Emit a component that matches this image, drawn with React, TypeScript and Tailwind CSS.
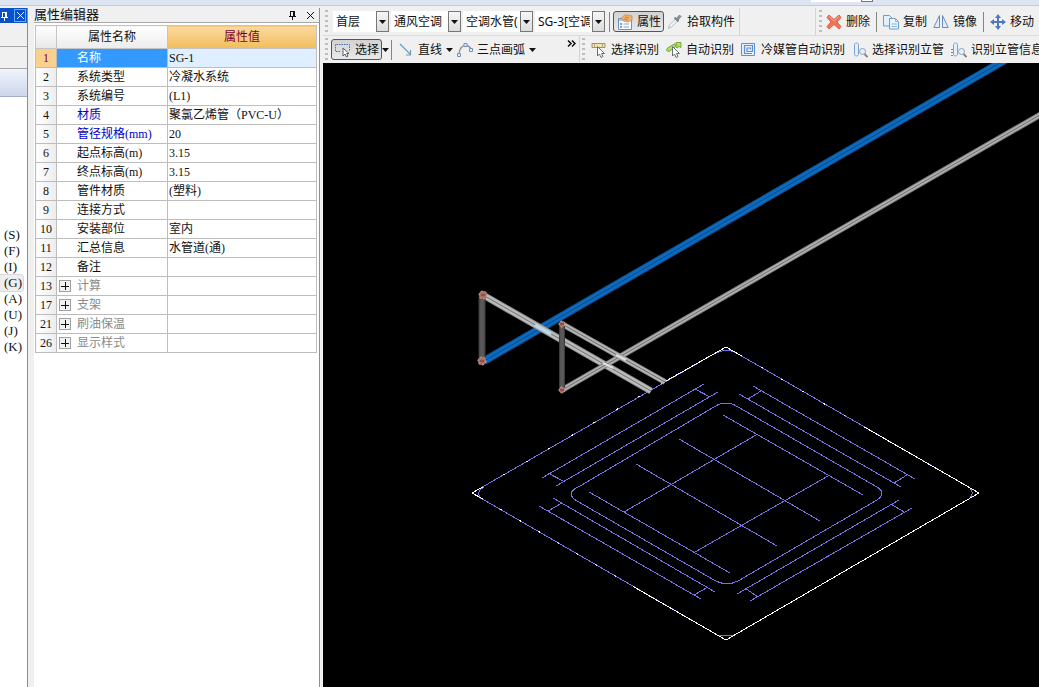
import type { ReactNode } from "react";

interface PropertyRow {
  no: number;
  name: string;
  value?: string;
  tone?: "link" | "group";
}

const rows: PropertyRow[] = [
  { no: 1, name: "名称", value: "SG-1" },
  { no: 2, name: "系统类型", value: "冷凝水系统" },
  { no: 3, name: "系统编号", value: "(L1)" },
  { no: 4, name: "材质", value: "聚氯乙烯管（PVC-U）", tone: "link" },
  { no: 5, name: "管径规格(mm)", value: "20", tone: "link" },
  { no: 6, name: "起点标高(m)", value: "3.15" },
  { no: 7, name: "终点标高(m)", value: "3.15" },
  { no: 8, name: "管件材质", value: "(塑料)" },
  { no: 9, name: "连接方式" },
  { no: 10, name: "安装部位", value: "室内" },
  { no: 11, name: "汇总信息", value: "水管道(通)" },
  { no: 12, name: "备注" },
  { no: 13, name: "计算", tone: "group" },
  { no: 17, name: "支架", tone: "group" },
  { no: 21, name: "刷油保温", tone: "group" },
  { no: 26, name: "显示样式", tone: "group" },
];

const shortcuts = ["(S)", "(F)", "(I)", "(G)", "(A)", "(U)", "(J)", "(K)"];

const Icon = ({ children }: { children: ReactNode }) => (
  <svg width="16" height="16" viewBox="0 0 16 16" fill="none" className="shrink-0" aria-hidden="true">
    {children}
  </svg>
);

const PinIcon = () => (
  <svg width="9" height="10" viewBox="0 0 9 10" fill="none" stroke="currentColor" shapeRendering="crispEdges" aria-hidden="true">
    <path d="M2.5 1v5M2 1.5h4M6 1v5M5.5 1v5M1 6.5h7M4.5 6v4" />
  </svg>
);

const CloseIcon = () => (
  <svg width="9" height="9" viewBox="0 0 9 9" fill="none" stroke="currentColor" aria-hidden="true">
    <path d="M1 1l7 7M8 1L1 8" />
  </svg>
);

const Triangle = () => (
  <svg width="7" height="4" viewBox="0 0 7 4" className="shrink-0" aria-hidden="true">
    <path d="M0 0h7L3.5 4z" fill="#111" />
  </svg>
);

const SelectIcon = () => (
  <Icon>
    <path d="M.5 9V2.500h14V9M1 9.500h5" stroke="#3b6fb6" strokeDasharray="1.500 1" />
    <path d="M8 6v8l2-2 1.500 3 1.500-1-1.300-2.500H14z" fill="#fff" stroke="#55616f" />
  </Icon>
);

const LineIcon = () => (
  <Icon>
    <path d="M2 2l10 10M12.500 8v5H8" stroke="#6f9bb8" strokeWidth="1.200" />
  </Icon>
);

const ArcIcon = () => (
  <Icon>
    <path d="M2 12C2.500 6 5 4 8 3.500M9 3.500c3 .5 4.500 2 5 4" stroke="#8796ab" strokeWidth="1.300" />
    <path d="M.5 11.500h3v3h-3zM7 1.500h3v3H7zM12.500 6.500h3v3h-3z" fill="#e6edf7" stroke="#7890b2" />
  </Icon>
);

const PropertyIcon = () => (
  <Icon>
    <path d="M1.500 4.500h13v11h-13z" fill="#f8fbff" stroke="#6f8fb3" />
    <path d="M2 5h12v2H2z" fill="#a9c5e6" />
    <path d="M3 9h2v2H3zM3 12h2v2H3z" fill="#7d9fc8" />
    <path d="M6.500 10H12M6.500 13H12" stroke="#8ba5c3" />
    <path d="M4.500 4l3-3h4l3.500 1v4l-4 2-4.500-1z" fill="#eeb16e" stroke="#cf8b48" strokeWidth=".8" />
    <path d="M8 3l4 1M7 5l4 1" stroke="#b86b2c" strokeWidth=".7" />
  </Icon>
);

const PickIcon = () => (
  <Icon>
    <path d="M1.500 14.500l1-3.500 6-6 2 2-6 6z" fill="#f4f6f8" stroke="#b4bac2" />
    <path d="M7.500 3.500l4 4" stroke="#7b858f" strokeWidth="2" />
    <path d="M9.500 4.500l3-3.500 1.500 1.500-3 3.500z" fill="#8b949c" stroke="#7b858f" />
  </Icon>
);

const PipeSelectIcon = () => (
  <Icon>
    <path d="M1 1.500h13v4H1z" fill="#f3e3b0" stroke="#a0926a" />
    <path d="M3.500 2v3.500M11.500 2v3.500" stroke="#b8a878" />
    <path d="M6.500 4.500v9.500l2-2 1.500 3.500 2-1-1.500-3h3z" fill="#fff" stroke="#6b6f76" />
  </Icon>
);

const PipeAutoIcon = () => (
  <Icon>
    <path d="M.5 8.500l1-2.500L9 1.500l2 2-8 6zM10 .5h5v5l-2-1-2 1.500-2-2 1.500-1.500z" fill="#b5dc72" stroke="#7ba737" />
    <path d="M6.500 4.500v9.500l2-2 1.500 3.500 2-1-1.500-3h3z" fill="#fff" stroke="#68736c" />
  </Icon>
);

const CoolantIcon = () => (
  <Icon>
    <path d="M.5 1.500h13v12H.5z" fill="#e6effb" stroke="#5d91d4" />
    <path d="M11 11.500H3.500v-8h8v6H6v-3.500h3.500v1.500" stroke="#5d91d4" strokeWidth="1.200" />
  </Icon>
);

const RiserIcon = ({ lines = false }: { lines?: boolean }) => (
  <Icon>
    <path d="M2.500 2.500c0-2 4-2 4 0v10c0 2-4 2-4 0z" fill="#e3eefb" stroke="#7ea3cb" />
    {lines && <path d="M0 7.500h2M0 10.500h2M0 13.500h2" stroke="#77889a" />}
    <circle cx="10.500" cy="9.500" r="3" fill="#e3effb" stroke="#91a3b6" />
    <path d="M12.500 12l3 3" stroke="#8b7f85" strokeWidth="1.800" />
  </Icon>
);

const DeleteIcon = () => (
  <Icon>
    <path d="M3 1l5 4.500L13 1l2 2.500L11 8l4 4.500L13 15l-5-4.500L3 15 1 12.500 5 8 1 3.500z" fill="#ee7359" stroke="#e2604c" />
    <path d="M3 2.500l5 4.500 5-4.500" stroke="#f6a792" />
  </Icon>
);

const CopyIcon = () => (
  <Icon>
    <path d="M.5 1.500h6l2.500 2.500v8H.5z" fill="#e1f0fb" stroke="#6d9fc4" />
    <path d="M6.500 4.500h6l3 3v7.500h-9z" fill="#e9f5fd" stroke="#6d9fc4" />
    <path d="M12.500 4.500v3h3M8.500 10H14M8.500 12.500H14" stroke="#8db6d6" />
  </Icon>
);

const MirrorIcon = () => (
  <Icon>
    <path d="M6.500 1.500v12H.8zM9.500 1.500v12h5.700z" fill="#e4edfa" stroke="#6b8bc0" />
  </Icon>
);

const MoveIcon = () => (
  <Icon>
    <path d="M8 2v12M2 8h12" stroke="#4d7ab9" strokeWidth="2" />
    <path d="M8 0l3 4H5zM8 16l-3-4h6zM0 8l4-3v6zM16 8l-4 3V5z" fill="#4d7ab9" />
  </Icon>
);

const Handle = () => (
  <span className="w-[3px] h-6 shrink-0 bg-[repeating-linear-gradient(#bdbdbd_0_2px,transparent_2px_5px)]" />
);

const Divider = () => <span className="w-px h-5 shrink-0 bg-[#858585]" />;

const ToolButton = ({ icon, label, active = false }: { icon: ReactNode; label: string; active?: boolean }) => (
  <button
    className={`flex items-center shrink-0 h-[21px] gap-1 whitespace-nowrap ${
      active
        ? "w-[51px] pl-[3px] rounded-[3px] border border-[#555] bg-gradient-to-b from-[#d2d2d2] to-[#e9e9e9]"
        : ""
    }`}
  >
    {icon}
    <span>{label}</span>
  </button>
);

const MenuArrow = ({ label }: { label: string }) => (
  <button aria-label={label} className="flex items-center justify-center w-[7px] h-5 shrink-0">
    <Triangle />
  </button>
);

const ToolSelect = ({ label, value, wide = true }: { label: string; value: string; wide?: boolean }) => (
  <div className={`relative h-[21px] shrink-0 bg-white ${wide ? "w-[70px]" : "w-14"}`}>
    <select aria-label={label} className="appearance-none w-full h-full pl-[3px] pr-[15px] bg-white outline-none">
      <option>{value}</option>
    </select>
    <span className="absolute right-0 top-0 flex items-center justify-center w-[13px] h-full border border-[#777] bg-gradient-to-b from-[#f6f6f6] to-[#dcdcdc] pointer-events-none">
      <Triangle />
    </span>
  </div>
);

const LeftDock = () => (
  <aside className="flex flex-col w-7 shrink-0 border-r border-[#8e8e8e] bg-white">
    <div className="flex items-center justify-end h-[15px] pr-px gap-[5px] bg-[#0a50c8] text-white">
      <button aria-label="固定">
        <PinIcon />
      </button>
      <button aria-label="关闭" className="flex items-center justify-center w-4 h-[13px] border border-[#5fb0ff]">
        <CloseIcon />
      </button>
    </div>
    <div className="h-6 border-b border-[#a8a8a8] bg-[#f0f0f0]" />
    <div className="h-[22px] border-b border-[#a8a8a8] bg-[#f0f0f0]" />
    <div className="h-7 border-b border-[#a5b0c8] bg-gradient-to-b from-[#f0f4fb] to-[#cdd7ec]" />
    <ul className="mt-[130px] font-['Liberation_Serif',serif] text-[13px] leading-4">
      {shortcuts.map((key) => (
        <li
          key={key}
          className={`h-4 pl-1 mr-1 ${key === "(G)" ? "rounded-r-[2px] bg-[#eeeeee] outline outline-[#d9d9d9]" : ""}`}
        >
          {key}
        </li>
      ))}
    </ul>
  </aside>
);

const nameColor = (row: PropertyRow) => {
  if (row.no === 1) return "bg-[#3399ff] text-white";
  if (row.tone === "link") return "text-[#0000c8]";
  if (row.tone === "group") return "text-[#8a8a8a]";
  return "";
};

const PropertyEditor = () => (
  <section className="flex flex-col w-[286px] ml-[6px] shrink-0 border-r border-[#8e8e8e] bg-white font-['Liberation_Serif','Noto_Sans_CJK_SC',serif]">
    <div className="flex items-center h-[15px] pr-1 bg-[#f0f0f0] border-b border-[#a8a8a8]">
      <h2 className="text-[13px] leading-[14px]">属性编辑器</h2>
      <button aria-label="固定" className="ml-auto">
        <PinIcon />
      </button>
      <button aria-label="关闭" className="ml-[9px]">
        <CloseIcon />
      </button>
    </div>
    <table className="table-fixed w-[282px] mt-[2px] ml-px border-collapse leading-[18px]">
      <thead>
        <tr className="h-[23px]">
          <th className="w-[21px] p-0 border border-[#c4c4c4] bg-gradient-to-b from-white to-[#e8e8e8]" />
          <th className="w-[111px] p-0 border border-[#c4c4c4] bg-gradient-to-b from-white to-[#ececec] font-normal">属性名称</th>
          <th className="p-0 border border-[#c4c4c4] bg-gradient-to-b from-[#fad9a0] to-[#f2bd58] font-normal text-[#800030]">属性值</th>
        </tr>
      </thead>
      <tbody>
        {rows.map((row) => (
          <tr key={row.no} className="h-[19px]">
            <td
              className={`p-0 border border-[#bdbdbd] text-center ${
                row.no === 1 ? "bg-[#fad08e] text-[#800030]" : "bg-gradient-to-r from-white to-[#ececec]"
              }`}
            >
              {row.no}
            </td>
            <td className={`p-0 border border-[#bdbdbd] ${nameColor(row)}`}>
              <div className="flex items-center h-[18px] pl-[2px]">
                <span className="w-[18px] shrink-0 flex">
                  {row.tone === "group" && (
                    <button aria-label={`展开${row.name}`} className="w-3 h-3 border border-[#a0a0a0] bg-[#f2f2f2]">
                      <svg width="10" height="10" viewBox="0 0 10 10" stroke="#111" shapeRendering="crispEdges">
                        <path d="M1 5.500h8M5.500 1v8" />
                      </svg>
                    </button>
                  )}
                </span>
                {row.name}
              </div>
            </td>
            <td className={`p-0 border border-[#bdbdbd] ${row.no === 1 ? "bg-[#dfefff]" : ""}`}>
              <div className="h-[18px] pl-px">{row.value}</div>
            </td>
          </tr>
        ))}
      </tbody>
    </table>
  </section>
);

const Toolbars = () => (
  <div className="shrink-0 bg-[#f0f0f0] whitespace-nowrap">
    <div className="flex h-7 border-b border-[#dcdcdc]">
      <div className="flex items-center shrink-0 pl-[2px] pr-1 border-r border-[#d4d4d4]">
        <Handle />
        <div className="flex gap-[2px] ml-[5px]">
          <ToolSelect label="楼层" value="首层" wide={false} />
          <ToolSelect label="专业" value="通风空调" />
          <ToolSelect label="构件类型" value="空调水管(水)" />
          <ToolSelect label="构件" value="SG-3[空调水]" />
        </div>
        <div className="flex items-center gap-[3px] ml-[4px]">
          <Divider />
          <ToolButton icon={<PropertyIcon />} label="属性" active />
          <ToolButton icon={<PickIcon />} label="拾取构件" />
        </div>
      </div>
      <div className="flex items-center shrink-0 ml-[75px] pl-[3px] border-l border-[#d4d4d4]">
        <Handle />
        <div className="flex items-center gap-[6px] ml-1">
          <ToolButton icon={<DeleteIcon />} label="删除" />
          <Divider />
          <ToolButton icon={<CopyIcon />} label="复制" />
          <ToolButton icon={<MirrorIcon />} label="镜像" />
          <Divider />
          <ToolButton icon={<MoveIcon />} label="移动" />
        </div>
      </div>
    </div>
    <div className="flex h-[27px]">
      <div className="flex items-center w-[257px] shrink-0 pl-[2px] pr-[3px] border-r border-[#d4d4d4]">
        <Handle />
        <div className="flex items-center ml-[3px]">
          <ToolButton icon={<SelectIcon />} label="选择" active />
          <MenuArrow label="选择方式" />
        </div>
        <div className="flex items-center gap-[3px] ml-[2px]">
          <Divider />
          <div className="flex items-center gap-1 ml-[3px]">
            <ToolButton icon={<LineIcon />} label="直线" />
            <MenuArrow label="直线类型" />
            <ToolButton icon={<ArcIcon />} label="三点画弧" />
            <MenuArrow label="画弧类型" />
          </div>
        </div>
        <button aria-label="更多" className="ml-auto mb-3">
          <svg width="9" height="7" viewBox="0 0 9 7" fill="none" stroke="#111" strokeWidth="1.500">
            <path d="M1 .5l3 3-3 3M5 .5l3 3-3 3" />
          </svg>
        </button>
      </div>
      <div className="flex items-center shrink-0 pl-[2px]">
        <Handle />
        <div className="flex items-center gap-[7px] ml-[6px]">
          <ToolButton icon={<PipeSelectIcon />} label="选择识别" />
          <ToolButton icon={<PipeAutoIcon />} label="自动识别" />
          <ToolButton icon={<CoolantIcon />} label="冷媒管自动识别" />
          <ToolButton icon={<RiserIcon />} label="选择识别立管" />
          <ToolButton icon={<RiserIcon lines />} label="识别立管信息" />
        </div>
      </div>
    </div>
  </div>
);

interface PipeProps {
  d: string;
  width: number;
  edge: string;
  body: string;
  core: string;
}

const Pipe = ({ d, width, edge, body, core }: PipeProps) => (
  <g>
    <path d={d} stroke={edge} strokeWidth={width} />
    <path d={d} stroke={body} strokeWidth={width - 2} />
    <path d={d} stroke={core} strokeWidth="1" />
  </g>
);

const Viewport = () => (
  <div className="flex-1 min-h-0 bg-black overflow-hidden">
    <svg className="block w-full h-full" viewBox="323 63 716 624" preserveAspectRatio="xMinYMin slice" fill="none" role="img" aria-label="三维视图">
      {/* Fan coil unit outline */}
      <g stroke="#7474e6" shapeRendering="crispEdges">
        <path d="M472 493L726 347L979 493L726 640Z" />
        <path d="M484 487Q474 493 483 500M716 353Q726 348 737 353M969 487Q976 493 968 500M719 635H734" />
        <path d="M580 486L714 407Q726 399 738 407L877 487Q887 493 877 500L738 581Q726 587 714 580L577 501Q564 493 580 486" />
        <path d="M542 478L704 384M556 486L718 392M548 473L563 481M695 389L710 397" />
        <path d="M539 506L701 599M553 498L715 592M548 511L562 503M694 595L708 587" />
        <path d="M753 386L915 479M739 394L901 487M748 399L761 391M894 483L907 475" />
        <path d="M737 594L899 500M750 601L912 508M745 588L758 597M891 504L904 512" />
        <path d="M723 415L863 495M679 439L820 521M636 464L777 546M589 492L730 573" />
        <path d="M624 512L756 435M695 552L828 476" />
      </g>
      <g stroke="#fff" shapeRendering="crispEdges">
        <path d="M481 488L472 493L481 498M666 381L726 347L740 355M866 428L979 493L726 640L634 587" />
        <path d="M481 488L666 381" strokeDasharray="2 24" />
        <path d="M740 355L866 428" strokeDasharray="2 22" />
        <path d="M481 498L634 587" strokeDasharray="2 20" />
      </g>
      {/* Pipes */}
      <Pipe d="M484 361L1012 56" width={8} edge="#0b4f94" body="#0c6bbd" core="#084a8c" />
      <Pipe d="M483 295L651 391" width={7} edge="#8f8f8f" body="#bcbcbc" core="#707070" />
      <path d="M535 325L551 334" stroke="#b9dcec" strokeWidth="3" />
      <Pipe d="M562 390L1045 112" width={6} edge="#7c7c7c" body="#b2b2b2" core="#6c6c6c" />
      <Pipe d="M562 324L665 382" width={6} edge="#8f8f8f" body="#b8b8b8" core="#686868" />
      <path d="M616 355l10 5M603 363l10 5" stroke="#dedede" strokeWidth="2" />
      <Pipe d="M482 297V360" width={7} edge="#3c3c3c" body="#545454" core="#5e5e5e" />
      <Pipe d="M562 326V389" width={6} edge="#3c3c3c" body="#545454" core="#5e5e5e" />
      {[
        [483, 295, 4],
        [482, 361, 4],
        [562, 324, 3],
        [562, 390, 3],
      ].map(([x, y, r]) => (
        <g key={`${x}-${y}`}>
          <circle cx={x} cy={y} r={r} fill="#a8706a" stroke="#d9a6a0" strokeDasharray="2 2" />
          <path d={`M${x - 2} ${y}h4`} stroke="#6d3430" />
        </g>
      ))}
    </svg>
  </div>
);

const App = () => (
  <div className="flex flex-col h-screen overflow-hidden bg-[#f0f0f0] text-xs text-[#111] font-['Noto_Sans','Noto_Sans_CJK_SC',sans-serif]">
    <div className="flex justify-end h-[6px] mb-[2px] shrink-0 pr-[166px] border-b border-[#c5c9d3] bg-[#dde4f2]">
      <span className="w-[50px] h-[2px] bg-white" />
      <span className="w-3 h-[2px] border border-t-0 border-[#777] bg-white" />
    </div>
    <div className="flex flex-1 min-h-0">
      <LeftDock />
      <PropertyEditor />
      <main className="flex flex-col flex-1 min-w-0 ml-[3px] overflow-hidden">
        <Toolbars />
        <Viewport />
      </main>
    </div>
  </div>
);

export default App;
